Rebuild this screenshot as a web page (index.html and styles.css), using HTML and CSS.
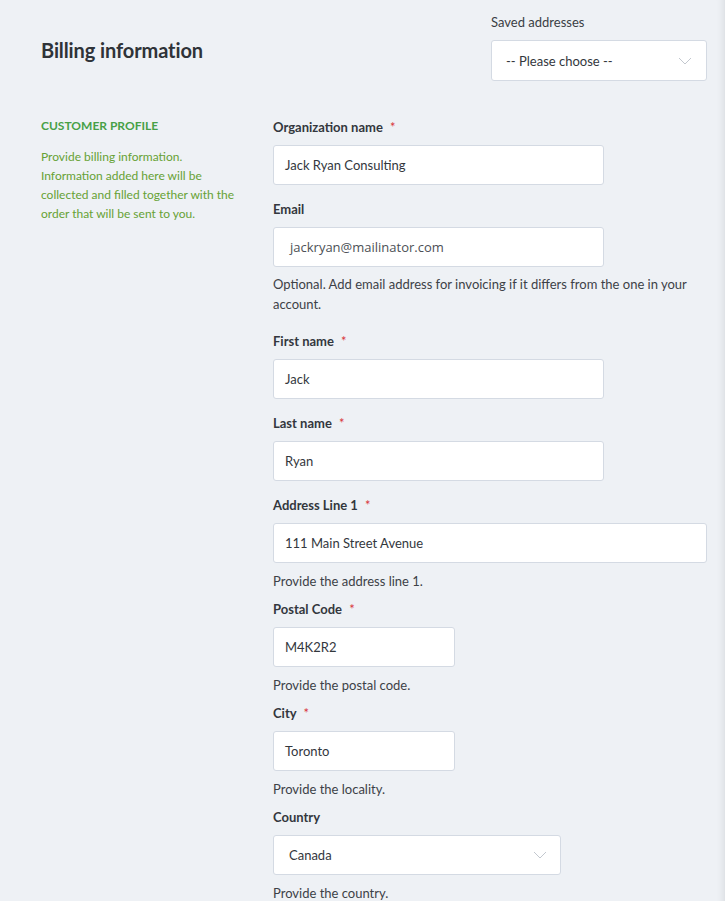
FILE: index.html
```html
<!DOCTYPE html>
<html lang="en">
<head>
<meta charset="utf-8">
<title>Billing information</title>
<link rel="stylesheet" href="styles.css">
</head>
<body>
<div class="page">
  <header class="page-head">
    <h1 class="title">Billing information</h1>
    <div class="saved">
      <div class="saved-label">Saved addresses</div>
      <div class="select select-saved">
        <span>-- Please choose --</span>
        <svg class="chev" width="14" height="8" viewBox="0 0 14 8"><path d="M1 1 L7 7 L13 1" fill="none" stroke="#c3c8cf" stroke-width="1"/></svg>
      </div>
    </div>
  </header>

  <div class="section">
    <aside class="side">
      <h2 class="side-title">CUSTOMER PROFILE</h2>
      <p class="side-text">Provide billing information. Information added here will be collected and filled together with the order that will be sent to you.</p>
    </aside>

    <div class="form">
      <div class="field">
        <div class="label">Organization name <span class="req">*</span></div>
        <div class="input w-md">Jack Ryan Consulting</div>
      </div>

      <div class="field field-email">
        <div class="label">Email</div>
        <div class="input w-md email">jackryan@mailinator.com</div>
        <div class="help">Optional. Add email address for invoicing if it differs from the one in your account.</div>
      </div>

      <div class="field">
        <div class="label">First name <span class="req">*</span></div>
        <div class="input w-md">Jack</div>
      </div>

      <div class="field">
        <div class="label">Last name <span class="req">*</span></div>
        <div class="input w-md">Ryan</div>
      </div>

      <div class="field with-help">
        <div class="label">Address Line 1 <span class="req">*</span></div>
        <div class="input w-full">111 Main Street Avenue</div>
        <div class="help">Provide the address line 1.</div>
      </div>

      <div class="field with-help">
        <div class="label">Postal Code <span class="req">*</span></div>
        <div class="input w-sm">M4K2R2</div>
        <div class="help">Provide the postal code.</div>
      </div>

      <div class="field with-help">
        <div class="label">City <span class="req">*</span></div>
        <div class="input w-sm">Toronto</div>
        <div class="help">Provide the locality.</div>
      </div>

      <div class="field with-help">
        <div class="label">Country</div>
        <div class="select select-country">
          <span>Canada</span>
          <svg class="chev" width="14" height="8" viewBox="0 0 14 8"><path d="M1 1 L7 7 L13 1" fill="none" stroke="#c3c8cf" stroke-width="1"/></svg>
        </div>
        <div class="help">Provide the country.</div>
      </div>
    </div>
  </div>
</div>
</body>
</html>
```

FILE: styles.css
```css
html, body {
  margin: 0;
  padding: 0;
  overflow: hidden;
}
body {
  background: #eef1f5;
  font-family: Lato, "Open Sans", "Liberation Sans", sans-serif;
  color: #33373d;
}
.page {
  min-height: 901px;
  padding: 12px 18px 0 41px;
  box-shadow: inset -10px 0 10px -10px rgba(0, 0, 0, 0.12);
}
.page-head {
  display: flex;
  justify-content: space-between;
  align-items: flex-start;
}
.title {
  margin: 26px 0 0;
  font-size: 20px;
  font-weight: 700;
  line-height: 24px;
  color: #2f3338;
  letter-spacing: -0.1px;
}
.saved {
  width: 216px;
}
.saved-label {
  font-size: 13px;
  line-height: 20px;
  margin-bottom: 8px;
  color: #3a3e44;
}
.select {
  box-sizing: border-box;
  height: 41px;
  background: #fff;
  border: 1px solid #d4dae3;
  border-radius: 3px;
  display: flex;
  align-items: center;
  justify-content: space-between;
  font-size: 13px;
  color: #33373d;
}
.select-saved {
  padding: 0 14px 0 14px;
}
.select-country {
  width: 288px;
  height: 40px;
  padding: 0 13px 0 15px;
}
.chev {
  display: block;
}
.section {
  display: flex;
  margin-top: 36px;
}
.side {
  width: 232px;
  flex: none;
}
.side-title {
  margin: 1px 0 0;
  font-size: 12px;
  font-weight: 700;
  line-height: 16px;
  color: #47a047;
}
.side-text {
  margin: 13px 0 0;
  font-size: 12px;
  line-height: 19px;
  color: #66a134;
  width: 196px;
}
.form {
  flex: 1;
}
.field {
  margin-bottom: 14px;
}
.field.with-help {
  margin-bottom: 8px;
}
.field-email {
  margin-bottom: 17px;
}
.label {
  font-size: 13px;
  font-weight: 700;
  line-height: 20px;
  margin-bottom: 8px;
  color: #33373d;
}
.req {
  color: #d8343a;
  margin-left: 4px;
  font-weight: 400;
}
.input {
  box-sizing: border-box;
  height: 40px;
  background: #fff;
  border: 1px solid #d4dae3;
  border-radius: 3px;
  padding: 0 11px;
  display: flex;
  align-items: center;
  font-size: 13px;
  color: #33373d;
}
.input.email {
  padding-left: 16px;
  font-family: "Open Sans", "Noto Sans", sans-serif;
  color: #4c5056;
}
.w-md { width: 331px; }
.w-full { width: 100%; }
.w-sm { width: 182px; }
.help {
  margin-top: 7px;
  font-size: 13px;
  line-height: 20px;
  color: #3d4147;
}
.with-help .help {
  margin-top: 8px;
}
```
